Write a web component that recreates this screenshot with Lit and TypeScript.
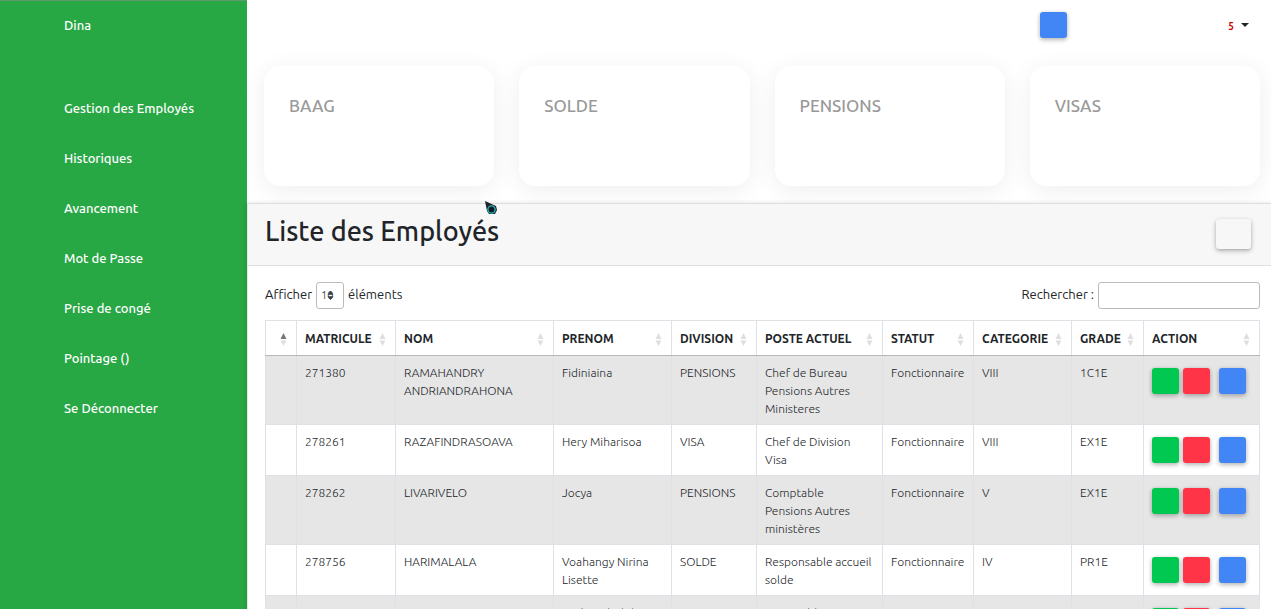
import { LitElement, html, css } from "lit";
import { customElement, state } from "lit/decorators.js";

interface Employee {
  matricule: string;
  nom: string;
  prenom: string;
  division: string;
  poste: string;
  statut: string;
  categorie: string;
  grade: string;
}

const MENU = [
  "Gestion des Employés",
  "Historiques",
  "Avancement",
  "Mot de Passe",
  "Prise de congé",
  "Pointage ()",
  "Se Déconnecter",
];

const CARDS = ["BAAG", "SOLDE", "PENSIONS", "VISAS"];

const COLUMNS = [
  { label: "", width: 31 },
  { label: "MATRICULE", width: 99 },
  { label: "NOM", width: 158 },
  { label: "PRENOM", width: 118 },
  { label: "DIVISION", width: 85 },
  { label: "POSTE ACTUEL", width: 126 },
  { label: "STATUT", width: 91 },
  { label: "CATEGORIE", width: 98 },
  { label: "GRADE", width: 72 },
  { label: "ACTION", width: 116 },
];

const row = (
  matricule: string, nom: string, prenom: string, division: string,
  poste: string, categorie: string, grade: string,
): Employee => ({ matricule, nom, prenom, division, poste, statut: "Fonctionnaire", categorie, grade });

const EMPLOYEES: Employee[] = [
  row("271380", "RAMAHANDRY ANDRIANDRAHONA", "Fidiniaina", "PENSIONS", "Chef de Bureau Pensions Autres Ministeres", "VIII", "1C1E"),
  row("278261", "RAZAFINDRASOAVA", "Hery Miharisoa", "VISA", "Chef de Division Visa", "VIII", "EX1E"),
  row("278262", "LIVARIVELO", "Jocya", "PENSIONS", "Comptable Pensions Autres ministères", "V", "EX1E"),
  row("278756", "HARIMALALA", "Voahangy Nirina Lisette", "SOLDE", "Responsable accueil solde", "IV", "PR1E"),
  row("285497", "RAMALANJAONA", "Andriambololona", "PENSIONS", "Comptable Pensions", "VI", "1C2E"),
];

@customElement("app-root")
export class AppRoot extends LitElement {
  @state() private query = "";

  static styles = css`
    :host {
      display: flex;
      height: 100vh;
      overflow: hidden;
      background: #fff;
      color: #212529;
      font-family: Ubuntu, "Noto Sans", sans-serif;
      font-size: 13px;
      line-height: 18px;
    }
    *, *::before, *::after { box-sizing: border-box; }
    button { font: inherit; border: 0; padding: 0; cursor: pointer; }

    .sidebar {
      flex: 0 0 247px;
      padding: 0 16px 0 64px;
      background: #28a745;
      box-shadow: inset 0 1px #5f9a6c;
    }
    .sidebar a {
      display: block;
      color: #fff;
      font-size: 13px;
      font-weight: 500;
      line-height: 50px;
      text-decoration: none;
    }
    .user { margin-bottom: 33px; }
    .menu { margin: 0; padding: 0; list-style: none; }

    .main { flex: 1; min-width: 0; display: flex; flex-direction: column; }
    .topbar {
      display: flex;
      align-items: center;
      justify-content: flex-end;
      gap: 161px;
      height: 50px;
      padding: 0 22px 0 16px;
      flex: none;
    }
    .square {
      width: 27px;
      height: 26px;
      border-radius: 3px;
      box-shadow: 0 2px 5px rgba(0, 0, 0, 0.2), 0 1px 4px rgba(0, 0, 0, 0.14);
    }
    .blue { background: #4285f4; }
    .green { background: #00c851; }
    .red { background: #ff3547; }
    .notify {
      display: flex;
      align-items: center;
      gap: 7px;
      background: none;
      color: #d00000;
      font-size: 10px;
      font-weight: 700;
    }
    .count { padding-top: 3px; }
    .caret {
      border: 4px solid transparent;
      border-top-color: #212529;
      border-bottom: 0;
    }

    .cards {
      display: grid;
      grid-template-columns: repeat(4, 1fr);
      gap: 25px;
      padding: 16px 11px 17px 17px;
      flex: none;
    }
    .card {
      height: 120px;
      padding: 28px 25px;
      border-radius: 16px;
      background: #fff;
      box-shadow: 0 4px 24px rgba(0, 0, 0, 0.07);
    }
    .card h2 {
      margin: 0;
      color: #999;
      font-size: 17px;
      font-weight: 500;
      line-height: 24px;
    }

    .panel {
      flex: 1;
      position: relative;
      background: #fff;
      border-left: 1px solid #e6e6e6;
      box-shadow: 0 1px 5px rgba(0, 0, 0, 0.18);
    }
    .panel-head {
      display: flex;
      justify-content: space-between;
      padding: 10px 20px 16px 17px;
      background: #f7f7f7;
      border-top: 1px solid #dfdfdf;
      border-bottom: 1px solid #dfdfdf;
    }
    .panel-head h1 {
      margin: 0;
      font-size: 27px;
      font-weight: 500;
      line-height: 34px;
    }
    .add {
      width: 35px;
      height: 30px;
      margin-top: 5px;
      border-radius: 3px;
      background: #f7f7f7;
      box-shadow: 0 2px 5px rgba(0, 0, 0, 0.24), 0 1px 3px rgba(0, 0, 0, 0.12);
    }
    .panel-body { padding: 16px 11px 0 17px; }
    .tools {
      display: flex;
      justify-content: space-between;
      margin-bottom: 11px;
      font-size: 13px;
      line-height: 25px;
    }
    .tools label { display: flex; align-items: flex-start; gap: 4px; }
    .tools select, .tools input {
      height: 27px;
      border: 1px solid #bbb;
      border-radius: 3px;
      background: #fff;
      color: #495057;
      font: inherit;
      font-size: 11px;
    }
    .tools input { width: 162px; padding: 2px 8px; }
    .select { display: grid; align-items: center; }
    .select > * { grid-area: 1 / 1; }
    .select select { width: 28px; padding: 0 4px; appearance: none; }
    .select svg { justify-self: end; margin-right: 10px; pointer-events: none; }

    table {
      width: 100%;
      table-layout: fixed;
      border-collapse: collapse;
      border: 1px solid #dee2e6;
    }
    th, td {
      padding: 8px 9px 6px 8px;
      border: 1px solid #dee2e6;
      text-align: left;
      vertical-align: top;
      font-size: 12px;
    }
    th {
      padding: 9px 9px 7px 8px;
      border-bottom-color: #b4b8bb;
      font-weight: 700;
      white-space: nowrap;
    }
    .head {
      display: flex;
      align-items: center;
      justify-content: space-between;
      min-height: 18px;
    }
    .sort { flex: none; fill: #dedede; }
    .sort .on { fill: #777; }
    td { font-weight: 300; color: #212529; }
    tbody tr:nth-child(odd) { background: #e6e6e6; }
    td.actions-cell { padding: 12px 0 6px 8px; }
    .actions { display: flex; gap: 4px; }
    .actions .blue { margin-left: 5px; }

    .cursor {
      position: absolute;
      left: 236px;
      top: -3px;
      pointer-events: none;
    }
  `;

  private sortIcon(active: boolean) {
    return html`<svg class="sort" width="7" height="13" viewBox="0 0 7 13" aria-hidden="true">
      <path class=${active ? "on" : ""} d="M3.500 0 6.500 6h-6z"></path>
      <path d="M.5 7.500h6L3.500 13z"></path>
    </svg>`;
  }

  private renderRow(e: Employee) {
    return html`<tr>
      <td></td>
      <td>${e.matricule}</td>
      <td>${e.nom}</td>
      <td>${e.prenom}</td>
      <td>${e.division}</td>
      <td>${e.poste}</td>
      <td>${e.statut}</td>
      <td>${e.categorie}</td>
      <td>${e.grade}</td>
      <td class="actions-cell">
        <div class="actions">
          <button class="square green" type="button"></button>
          <button class="square red" type="button"></button>
          <button class="square blue" type="button"></button>
        </div>
      </td>
    </tr>`;
  }

  render() {
    const q = this.query.toLowerCase();
    const rows = EMPLOYEES.filter((e) => Object.values(e).join(" ").toLowerCase().includes(q));
    return html`
      <nav class="sidebar">
        <a class="user" href="#">Dina</a>
        <ul class="menu">
          ${MENU.map((m) => html`<li><a href="#">${m}</a></li>`)}
        </ul>
      </nav>
      <main class="main">
        <header class="topbar">
          <button class="square blue" type="button"></button>
          <button class="notify" type="button"><span class="count">5</span><span class="caret"></span></button>
        </header>
        <section class="cards">
          ${CARDS.map((c) => html`<article class="card"><h2>${c}</h2></article>`)}
        </section>
        <section class="panel">
          <div class="panel-head">
            <h1>Liste des Employés</h1>
            <button class="add" type="button"></button>
          </div>
          <svg class="cursor" width="15" height="16" viewBox="0 0 15 16" aria-hidden="true">
            <path d="M1 1 12 6l1 4-2 4H5L3 11z" fill="#1c2226"></path>
            <circle cx="7.500" cy="9.500" r="3.600" fill="#101820" stroke="#27b5bd" stroke-width="1.400"></circle>
          </svg>
          <div class="panel-body">
            <div class="tools">
              <label>Afficher
                <span class="select">
                  <select><option>10</option><option>25</option><option>50</option><option>100</option></select>
                  <svg width="7" height="9" viewBox="0 0 7 9" aria-hidden="true">
                    <path d="M3.500 0 6.500 3.800h-6zM.5 5.200h6L3.500 9z" fill="#343a40"></path>
                  </svg>
                </span>
                éléments
              </label>
              <label>Rechercher :
                <input type="search" .value=${this.query}
                  @input=${(ev: Event) => { this.query = (ev.target as HTMLInputElement).value; }}>
              </label>
            </div>
            <table>
              <colgroup>${COLUMNS.map((c) => html`<col style="width:${c.width}px">`)}</colgroup>
              <thead>
                <tr>${COLUMNS.map((c, i) => html`<th scope="col"><div class="head"><span>${c.label}</span>${this.sortIcon(i === 0)}</div></th>`)}</tr>
              </thead>
              <tbody>${rows.map((e) => this.renderRow(e))}</tbody>
            </table>
          </div>
        </section>
      </main>
    `;
  }
}
